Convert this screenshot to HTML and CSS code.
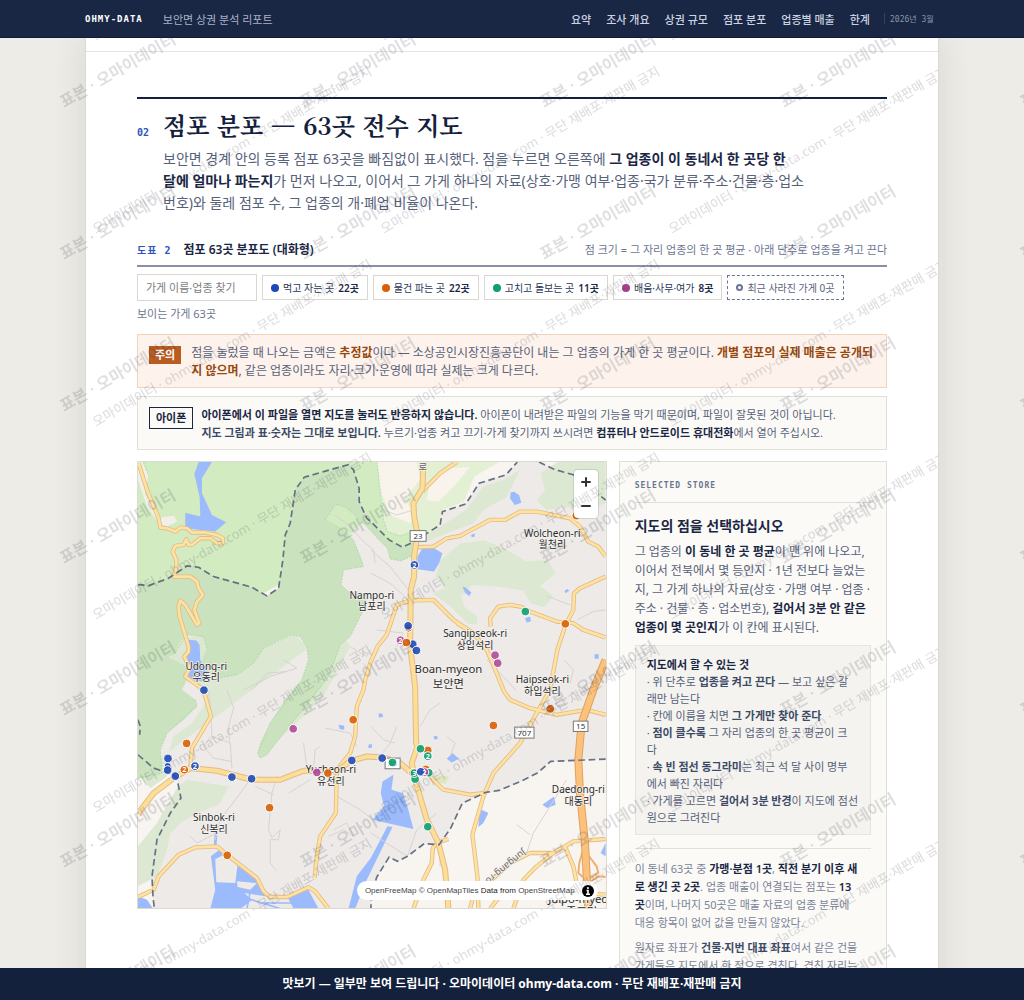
FILE: index.html
```html
<!DOCTYPE html>
<html lang="ko">
<head>
    <meta charset="UTF-8">
    <meta name="viewport" content="width=device-width, initial-scale=1.0">
    <title>보안면 상권 분석 리포트 - OHMY-DATA</title>
    <link rel="stylesheet" href="styles.css">
</head>
<body>
    <header class="topbar">
        <div class="topbar-inner">
            <span class="brand">OHMY-DATA</span>
            <span class="report-name">보안면 상권 분석 리포트</span>
            <nav>
                <a href="#summary">요약</a>
                <a href="#overview">조사 개요</a>
                <a href="#scale">상권 규모</a>
                <a href="#stores">점포 분포</a>
                <a href="#sales">업종별 매출</a>
                <a href="#limits">한계</a>
            </nav>
            <span class="issue">2026년 3월</span>
        </div>
    </header>

    <div class="stage">
        <main class="page">
            <div class="prev-end"></div>
            <section id="stores">
                <div class="section-head">
                    <span class="num">02</span>
                    <div>
                        <h2>점포 분포 — 63곳 전수 지도</h2>
                        <p class="lead">보안면 경계 안의 등록 점포 63곳을 빠짐없이 표시했다. 점을 누르면 오른쪽에 <b>그 업종이 이 동네서 한 곳당 한<br>달에 얼마나 파는지</b>가 먼저 나오고, 이어서 그 가게 하나의 자료(상호·가맹 여부·업종·국가 분류·주소·건물·층·업소번호)와 둘레 점포 수, 그 업종의 개·폐업 비율이 나온다.</p>
                    </div>
                </div>

                <div class="figure-head">
                    <span class="fig-no">도표 2</span>
                    <h3>점포 63곳 분포도 (대화형)</h3>
                    <span class="fig-note">점 크기 = 그 자리 업종의 한 곳 평균 · 아래 단추로 업종을 켜고 끈다</span>
                </div>

                <div class="filters">
                    <input type="text" placeholder="가게 이름·업종 찾기" aria-label="가게 이름·업종 찾기">
                    <button type="button"><i class="dot blue"></i>먹고 자는 곳 <b>22곳</b></button>
                    <button type="button"><i class="dot orange"></i>물건 파는 곳 <b>22곳</b></button>
                    <button type="button"><i class="dot green"></i>고치고 돌보는 곳 <b>11곳</b></button>
                    <button type="button"><i class="dot purple"></i>배움·사무·여가 <b>8곳</b></button>
                    <button type="button" class="closed"><i class="dot ring"></i>최근 사라진 가게 0곳</button>
                </div>
                <p class="visible-count">보이는 가게 63곳</p>

                <div class="notice warn">
                    <span class="tag">주의</span>
                    <p>점을 눌렀을 때 나오는 금액은 <b>추정값</b>이다 — 소상공인시장진흥공단이 내는 그 업종의 가게 한 곳 평균이다. <b>개별 점포의 실제 매출은 공개되지 않으며</b>, 같은 업종이라도 자리·크기·운영에 따라 실제는 크게 다르다.</p>
                </div>
                <div class="notice phone">
                    <span class="tag">아이폰</span>
                    <p><b>아이폰에서 이 파일을 열면 지도를 눌러도 반응하지 않습니다.</b> 아이폰이 내려받은 파일의 기능을 막기 때문이며, 파일이 잘못된 것이 아닙니다.<br><b class="soft">지도 그림과 표·숫자는 그대로 보입니다.</b> 누르기·업종 켜고 끄기·가게 찾기까지 쓰시려면 <b>컴퓨터나 안드로이드 휴대전화</b>에서 열어 주십시오.</p>
                </div>

                <div class="map-row">
                    <div class="map">
                        <svg class="map-canvas" viewBox="3 6 1404 1341" preserveAspectRatio="xMidYMin slice" role="img" aria-label="보안면 점포 분포 지도">
                            <rect x="0" y="0" width="1410" height="1350" fill="#f8f4f0"/>
                            <!-- 보안면 -->
                            <path fill="#edeae8" d="M3 374L35 377 95 355 150 318 185 322 230 350 345 382 390 408 425 385 438 300 445 225 460 190 475 90 502 52 560 35 635 14 650 30 667 85 667 125 690 175 707 190 757 240 797 262 832 245 910 195 917 155 987 132 1027 70 1107 45 1142 6H1207L1252 28 1312 45 1342 70 1407 120V898L1242 905 1202 940 1152 965 1087 992 1047 998 977 1030 942 1105 907 1155 862 1152 812 1190 782 1205 757 1192 720 1252 705 1300 702 1347H52L48 1310 45 1250 60 1140 100 1060 132 1015 120 957 110 945 50 925 3 885Z"/>
                            <!-- 숲 -->
                            <g fill="#dce8d1">
                                <path d="M722 6H1087L1012 50 982 125 917 150 905 200 850 240 790 235 735 215Z" fill="#e3f0d3"/>
                                <path d="M912 200L987 150 1040 80 1100 60 1150 30 1110 110 1040 150 1010 190 930 220 870 245 830 250Z"/>
                                <path d="M1212 40L1262 6H1407V130L1342 152 1290 140 1230 150 1200 120 1225 90Z"/>
                                <path d="M897 350L912 300 972 250 1042 242 1102 265 1170 305 1232 300 1257 340 1210 378 1250 410 1222 442 1182 430 1160 392 1082 380 1002 375 992 402 972 402 982 440 1022 470 1020 495 992 490 942 440 887 400 925 385Z"/>
                                <path d="M150 960L275 980 245 1035 180 1060 130 1090 100 1120 90 1170 60 1250 3 1280V1160L60 1090 120 985Z"/>
                                <path d="M3 945L40 985 90 950 95 880 110 830 165 790 205 730 185 690 150 650 100 600 120 540 205 525 240 560 215 600 260 640 340 600 390 560 470 525 515 560 520 640 540 700 420 780 345 950 370 895 560 710 640 560 600 500 Z"/>
                                <path d="M892 945L937 950 927 972 890 965Z" fill="#dde7c0"/>
                            </g>
                            <path fill="#d3ebc1" d="M3 6H722L727 75 735 130 740 180 752 215 790 228 830 215 837 245 800 262 757 240 690 175 560 300 200 500 3 374Z"/>
                            <path fill="#cae2bd" d="M3 374L35 377 95 355 150 318 185 322 230 350 345 382 390 408 425 385 438 300 445 225 460 190 475 90 502 52 560 35 635 14 650 30 667 85 667 125 690 175 707 190 757 240 797 262 837 245 832 285 792 303 760 297 752 265 722 235 690 200 660 170 625 140 595 133 565 180 575 190 610 205 650 240 670 290 680 320 620 330 612 375 640 400 690 405 685 440 660 490 640 530 610 555 595 600 575 650 540 700 500 750 440 820 390 885 370 895 362 880 370 850 400 790 445 720 495 660 515 600 510 560 490 530 465 525 430 540 380 565 350 610 300 645 240 655 205 635 195 600 210 565 200 530 150 525 130 545 110 585 95 592 120 605 150 620 150 660 135 690 175 720 180 740 140 780 90 820 70 870 75 940 40 955 3 955Z"/>
                            <path class="forest-edge" d="M722 6L727 75 735 130 740 180 752 215 790 228 830 215M832 285L792 303 760 297 752 265 722 235 690 200 660 170 625 140 595 133 565 180 610 205 650 240 670 290 680 320 620 330 612 375 640 400 690 405 685 440 640 530 610 555 575 650 440 820 390 885 370 895 362 880 400 790 495 660 515 600 510 560 490 530 465 525 380 565 350 610 300 645 240 655M210 565L200 530 150 525 110 585M175 720L180 740 90 820 70 870 75 940 3 955M20 6L35 50 25 100 50 150"/>
                            <path fill="#f2efe8" d="M3 6H16L35 50 24 100 50 150 70 172 112 168 120 185 90 200 65 190 30 140 3 60Z"/>
                            <path fill="#f8f4ec" d="M722 6H840L850 60 800 120 840 160 820 190 760 165 735 100ZM880 60L940 25 1000 20 960 70 905 125 870 120Z"/>

                            <!-- 물 -->
                            <g fill="#9bbbfc">
                                <path d="M185 6H225L195 55V100L225 165 268 187 235 215 145 205V158L190 170 188 110 172 42Z"/>
                                <path d="M155 540L178 542 188 555 190 600 215 640 195 665 155 655 150 600Z"/>
                                <path d="M857 265L887 262 917 280 907 310 892 335 842 328V290Z"/>
                                <path d="M1122 97L1132 95 1147 105 1154 128 1134 135 1120 115ZM1003 225L1014 220V230L1005 232ZM977 380L985 382 1004 398 997 408 985 398ZM1283 393L1292 387 1298 392 1288 400ZM1165 475L1180 470 1183 484 1170 488ZM1374 583H1386V597H1374Z"/>
                                <path d="M770 945L764 990 797 1000 812 1040 830 1108 707 1080 742 1040 732 1000 737 965Z"/>
                                <path d="M752 1100L767 1102 690 1260 655 1347H635L660 1250 702 1195Z"/>
                                <path d="M930 897L947 880 967 897 945 908ZM1027 1070L1035 1050 1055 1060 1040 1090 1025 1102ZM1217 1035L1252 1010 1257 1035 1232 1045ZM1407 1150L1392 1180 1407 1190ZM725 762L735 760 740 770 727 774ZM890 830L900 828 904 836 894 840ZM606 795L622 798V810L608 808ZM695 855L705 853V865H695Z"/>
                                <path d="M234 1110H243L238 1165H230ZM3 1310L30 1320 48 1347H3Z"/>
                                <path d="M222 1190L250 1168 262 1185 235 1198 238 1268 295 1270 302 1215 360 1250 385 1310 440 1315 510 1282 545 1347H220L235 1290Z"/>
                            </g>
                            <path fill="#edeae8" d="M322 1300L400 1312 455 1318 470 1347H312L345 1320ZM300 1265L360 1270 340 1290 302 1282Z"/>
                            <path fill="none" stroke="#9bbbfc" stroke-width="5" d="M310 1310L430 1347M340 1295L330 1347M380 1330H470"/>

                            <!-- 길 -->
                            <path class="lane" d="M595 165L640 200 675 240 710 270 715 310M215 690L222 760 225 830 280 850 285 925M270 690L290 745 275 800 278 850M222 830L200 860 230 895 285 905M340 960L250 1080 235 1140M420 950L405 1000 395 1110 405 1135 430 1110 425 1140 400 1140V1210L418 1232M355 980L410 1005M500 850L510 925M530 930L535 870 550 860M320 690L400 650 480 625 440 600M345 690L390 640 450 635M600 1010L670 1050 720 1090M575 1130L620 1110 650 1130 630 1090 590 1110M565 805L640 820 660 860M720 510L800 520 780 560M702 340L760 370 810 415M702 270L760 320 815 390M740 150L780 165 830 150M1050 600L1090 640 1137 690M1230 408L1260 420 1300 435M1322 480L1370 455 1407 450M1282 600L1310 630 1300 670M780 800L760 850 730 890M702 800L740 840 775 850M850 800L880 750 910 730M930 830L955 850 940 890M812 1190L840 1110 900 1060M910 1155V1220M1170 1180L1190 1120 1240 1040 1290 960M1140 1095L1180 1125M702 1120L812 1190M455 1000L520 960M160 1130L180 1150 230 1125M640 560L690 590 702 570M700 640L680 610"/>
                            <g class="road case">
                                <path id="r1" d="M5 10L30 90 65 175 70 203 90 205 115 215 130 203 150 205 165 218 200 217 240 225 258 235 258 250 240 250 220 235 190 235 165 255 155 255 148 238 140 255 115 258 107 275 118 300V325L110 350H160L180 365 185 385 198 405 180 425 172 450 187 490 180 495 145 435 130 422 125 440 128 470 155 560V575L142 590 158 625 145 650 200 690 222 770 165 865 160 925"/>
                                <path id="r2" d="M680 690L660 740 655 830 640 880 600 930 597 1060 550 1130 540 1190 533 1255M680 690L685 660 702 605 722 560 750 525 780 435 820 422 890 420 910 440 950 480 1010 520 1050 570 1080 640 1102 695 1120 720 1180 745 1260 765 1350 750 1407 765M960 6L910 40 870 80 857 95"/>
                                <path id="r3" d="M840 262L890 260 930 235 970 228 1060 180H1105L1150 155H1200L1300 175 1330 200 1355 245 1385 260 1407 290M1062 500L1060 475 1085 440 1120 435 1150 440 1180 455 1260 485 1310 490 1340 510 1407 533M1407 350L1330 385 1312 400 1310 450 1285 500 1262 570 1240 690 1200 760 1150 850 1070 940 1040 1010 1007 1125 1022 1250 1025 1347M880 950L920 990 1000 1005 1040 1000M960 490L1010 520"/>
                                <path id="r4" d="M1407 1138L1310 1145 1250 1180H1180L1120 1210 1060 1265 1010 1310 1000 1347M1250 1180L1200 1220 1160 1260 1130 1347M1285 1160L1310 1220 1320 1270M935 1138L900 1150 888 1165 885 1210 860 1260 830 1347M3 1312L50 1290 65 1250 125 1185 175 1163 240 1160 270 1185 360 1255 380 1295 400 1312H450L515 1283 535 1295 575 1347M1060 1347L1090 1310 1160 1310M1320 1300L1407 1305"/>
                            </g>
                            <g class="road fill">
                                <use href="#r1"/><use href="#r2"/><use href="#r3"/><use href="#r4"/>
                            </g>
                            <g class="trunk case">
                                <path id="t1" d="M3 1062L50 1000 110 955 160 925 240 933 345 960H430L500 933 600 935 640 905 690 890 740 893 790 910 822 938M860 6L857 85 830 130 832 170 842 220 832 290V350L822 390 820 560 835 680 838 850 842 860 825 910 835 960 870 1080 905 1150 925 1230 935 1347"/>
                            </g>
                            <g class="trunk fill"><use href="#t1"/></g>
                            <path class="ramp" d="M1345 1150L1328 1210 1325 1240 1350 1262 1385 1240 1380 1220 1350 1180M1355 1270L1385 1250 1407 1252"/>
                            <path class="highway case" d="M1407 600L1370 690 1335 790 1325 900 1330 1000 1345 1150 1355 1347"/>
                            <path class="highway" d="M1407 600L1370 690 1335 790 1325 900 1330 1000 1345 1150 1355 1347"/>

                            <!-- 면 경계 -->
                            <path class="boundary" d="M3 374L35 377 95 355 150 318 185 322 230 350 345 382 390 408 425 385 438 300 445 225 460 190 475 90 502 52 560 35 635 14 650 30 667 85 667 125 690 175 707 190 757 240 797 262 832 245 910 195 917 155 987 132 1027 70 1107 45 1142 6M1207 6L1252 28 1312 45 1342 70 1407 120M1407 898L1242 905 1202 940 1152 965 1087 992 1047 998 977 1030 942 1105 907 1155 862 1152 812 1190 782 1205 757 1192 720 1252 705 1300 702 1347M3 885L50 925 110 945 120 957 132 1015 100 1060 60 1140 45 1250 48 1310 52 1347M3 780L10 800 8 825"/>

                            <g class="shield">
                                <rect x="820" y="212" width="48" height="32"/><text x="844" y="238">23</text>
                                <rect x="1134" y="802" width="58" height="33"/><text x="1163" y="828">707</text>
                                <rect x="1310" y="784" width="44" height="31"/><text x="1332" y="809">15</text>
                                <rect x="745" y="895" width="45" height="32"/><text x="767" y="920">30</text>
                            </g>
                            <g class="place">
                                <text class="street" x="858" y="29">로</text>
                                <text x="1247" y="230">Wolcheon-ri</text><text x="1247" y="265">월천리</text>
                                <text x="705" y="416">Nampo-ri</text><text x="705" y="451">남포리</text>
                                <text x="1015" y="531">Sangipseok-ri</text><text x="1015" y="566">상입석리</text>
                                <text x="208" y="630">Udong-ri</text><text x="208" y="665">우동리</text>
                                <text x="1217" y="671">Haipseok-ri</text><text x="1217" y="706">하입석리</text>
                                <text x="582" y="941">Yucheon-ri</text><text x="582" y="976">유천리</text>
                                <text x="1325" y="1000">Daedong-ri</text><text x="1325" y="1035">대동리</text>
                                <text x="231" y="1084">Sinbok-ri</text><text x="231" y="1119">신복리</text>
                                <text class="street start" transform="translate(1158 1168) rotate(141)">Jungang-ro</text>
                                <g class="big">
                                    <text x="935" y="641">Boan-myeon</text><text x="935" y="684">보안면</text>
                                    <text x="1335" y="1330">Julpo-myeon</text><text x="1335" y="1370">줄포면</text>
                                </g>
                            </g>

                            <!-- 점포 -->
                            <g class="stores">
                                <g fill="#d95f02">
                                    <circle cx="1319" cy="167" r="13"/><circle cx="1286" cy="492" r="13"/><circle cx="815" cy="505" r="12"/>
                                    <circle cx="649" cy="780" r="13"/><circle cx="1070" cy="797" r="13"/><circle cx="1241" cy="747" r="13"/>
                                    <circle cx="149" cy="851" r="13"/><circle cx="142" cy="930" r="13"/><circle cx="573" cy="940" r="13"/>
                                    <circle cx="398" cy="1044" r="13"/><circle cx="271" cy="1187" r="13"/><circle cx="873" cy="872" r="13"/>
                                    <circle cx="867" cy="929" r="13"/><circle cx="829" cy="940" r="13"/>
                                </g>
                                <g fill="#1f4bb8">
                                    <circle cx="833" cy="315" r="13"/><circle cx="828" cy="553" r="13"/><circle cx="839" cy="572" r="13"/>
                                    <circle cx="814" cy="498" r="13"/><circle cx="201" cy="691" r="13"/><circle cx="92" cy="918" r="10"/><circle cx="93" cy="896" r="13"/>
                                    <circle cx="92" cy="931" r="13"/><circle cx="115" cy="949" r="13"/><circle cx="174" cy="919" r="13"/>
                                    <circle cx="285" cy="952" r="13"/><circle cx="344" cy="957" r="13"/><circle cx="645" cy="902" r="13"/>
                                    <circle cx="736" cy="895" r="13"/>
                                </g>
                                <g fill="#b04a98">
                                    <circle cx="791" cy="541" r="13"/><circle cx="1075" cy="586" r="13"/><circle cx="1083" cy="610" r="13"/>
                                    <circle cx="469" cy="807" r="13"/><circle cx="540" cy="938" r="13"/>
                                </g>
                                <circle cx="809" cy="548" r="13" fill="#d95f02"/>
                                <g fill="#109e73">
                                    <circle cx="1166" cy="455" r="13"/><circle cx="851" cy="867" r="13"/><circle cx="873" cy="889" r="13"/>
                                    <circle cx="767" cy="908" r="13"/><circle cx="876" cy="939" r="13"/><circle cx="835" cy="958" r="13"/>
                                    <circle cx="873" cy="1101" r="13"/><circle cx="833" cy="940" r="13"/>
                                </g>
                                <circle cx="863" cy="937" r="13" fill="#b04a98"/>
                                <circle cx="852" cy="936" r="13" fill="#1f4bb8"/>
                                <g class="count">
                                    <text x="833" y="323">2</text><text x="791" y="549">2</text><text x="142" y="938">2</text>
                                    <text x="174" y="927">2</text><text x="873" y="897">2</text><text x="863" y="945">2</text><text x="833" y="948">3</text>
                                </g>
                            </g>
                        </svg>
                        <div class="map-zoom">
                            <button type="button" aria-label="확대"><svg viewBox="0 0 24 24"><path d="M12 8v8M8 12h8"/></svg></button>
                            <button type="button" aria-label="축소"><svg viewBox="0 0 24 24"><path d="M8 12h8"/></svg></button>
                        </div>
                        <div class="map-credit">
                            <span><a href="#openfreemap">OpenFreeMap</a> <a href="#openmaptiles">© OpenMapTiles</a> Data from <a href="#osm">OpenStreetMap</a></span>
                            <svg viewBox="0 0 12 12"><circle cx="6" cy="6" r="6"/><path d="M6 2v2M4.500 5.500H6V9M4 9.200h4" fill="none" stroke="#fff" stroke-width="1.600"/></svg>
                        </div>
                    </div>

                    <aside class="panel">
                        <div class="panel-label">SELECTED STORE</div>
                        <h4>지도의 점을 선택하십시오</h4>
                        <p class="panel-intro">그 업종의 <b>이 동네 한 곳 평균</b>이 맨 위에 나오고, 이어서 전북에서 몇 등인지 · 1년 전보다 늘었는지, 그 가게 하나의 자료(상호 · 가맹 여부 · 업종 · 주소 · 건물 · 층 · 업소번호), <b>걸어서 3분 안 같은 업종이 몇 곳인지</b>가 이 칸에 표시된다.</p>
                        <div class="howto">
                            <b class="howto-title">지도에서 할 수 있는 것</b>
                            <p>· 위 단추로 <b>업종을 켜고 끈다</b> — 보고 싶은 갈<br>래만 남는다</p>
                            <p>· 칸에 이름을 치면 <b>그 가게만 찾아 준다</b></p>
                            <p>· <b>점이 클수록</b> 그 자리 업종의 한 곳 평균이 크<br>다</p>
                            <p>· <b>속 빈 점선 동그라미</b>는 최근 석 달 사이 명부<br>에서 빠진 자리다</p>
                            <p>· 가게를 고르면 <b>걸어서 3분 반경</b>이 지도에 점선 원으로 그려진다</p>
                        </div>
                        <div class="panel-foot">
                            <p>이 동네 63곳 중 <b>가맹·분점 1곳</b>, <b>직전 분기 이후 새로 생긴 곳 2곳</b>. 업종 매출이 연결되는 점포는 <b>13곳</b>이며, 나머지 50곳은 매출 자료의 업종 분류에 대응 항목이 없어 값을 만들지 않았다.</p>
                            <p>원자료 좌표가 <b class="soft">건물·지번 대표 좌표</b>여서 같은 건물 가게들은 지도에서 한 점으로 겹친다. 겹친 자리는</p>
                        </div>
                    </aside>
                </div>
            </section>
            <svg class="mark" aria-hidden="true">
                <defs>
                    <pattern id="mark-page" patternUnits="userSpaceOnUse" x="0" y="18" width="288" height="193">
                        <text class="mark-text" transform="translate(10 178) rotate(-30)">오마이데이터 · ohmy-data.com · 무단 재배포·재판매 금지</text>
                    </pattern>
                </defs>
                <rect width="100%" height="100%" fill="url(#mark-page)"/>
            </svg>
        </main>
        <svg class="mark" aria-hidden="true">
            <defs>
                <pattern id="mark-sample" patternUnits="userSpaceOnUse" x="50" y="-18" width="240" height="152">
                    <text class="mark-text sample" transform="translate(14 88) rotate(-30)">표본 · 오마이데이터</text>
                </pattern>
            </defs>
            <rect width="100%" height="100%" fill="url(#mark-sample)"/>
        </svg>
    </div>

    <footer class="sample-bar">맛보기 — 일부만 보여 드립니다 · 오마이데이터 ohmy-data.com · 무단 재배포·재판매 금지</footer>
</body>
</html>
```
FILE: styles.css
```css
* {
    box-sizing: border-box;
}
body {
    display: flex;
    flex-direction: column;
    height: 100vh;
    margin: 0;
    background: #eeece7;
    color: #1a2744;
    font-family: "Noto Sans", "Noto Sans CJK KR", sans-serif;
    font-size: 12px;
}
h2, h3, h4, p {
    margin: 0;
}
b {
    color: #1a2744;
    font-weight: 600;
}
b.soft {
    color: #3d4a66;
}

/* top bar */
.topbar {
    flex: none;
    height: 38px;
    background: #1a2744;
    border-bottom: 1px solid #0f1b38;
}
.topbar-inner {
    display: flex;
    align-items: center;
    max-width: 854px;
    height: 100%;
    margin: 0 auto;
    font-size: 11px;
}
.brand {
    color: #fff;
    font-family: "DejaVu Sans Mono", monospace;
    font-size: 9px;
    font-weight: 700;
    letter-spacing: 1px;
}
.report-name {
    margin-left: 20px;
    color: #a9b3c8;
}
.topbar nav {
    display: flex;
    gap: 15px;
    margin-left: auto;
}
.topbar nav a {
    color: #cbd3e2;
    text-decoration: none;
    font-weight: 500;
}
.issue {
    width: 55px;
    margin-left: 14px;
    padding-left: 5px;
    border-left: 1px solid #33415f;
    color: #8793ad;
    font-family: "DejaVu Sans Mono", "Noto Sans CJK KR", monospace;
    font-size: 8px;
    white-space: nowrap;
}

/* page */
.stage {
    position: relative;
    flex: 1;
    min-height: 0;
    overflow: hidden;
}
.page {
    position: relative;
    max-width: 854px;
    min-height: 100%;
    margin: 0 auto;
    background: #fff;
    border: 1px solid #dcdad3;
    border-width: 0 1px;
    box-shadow: 0 0 32px rgba(60, 55, 40, 0.12);
}
.prev-end {
    height: 14px;
    border-bottom: 1px solid #e5e5df;
}
section {
    padding: 45px 51px 40px;
}
.section-head {
    display: flex;
    gap: 12px;
    padding-top: 8px;
    border-top: 2px solid #14213d;
}
.num {
    width: 14px;
    padding-top: 20px;
    color: #2f56c0;
    font-family: "DejaVu Sans Mono", monospace;
    font-size: 10px;
    font-weight: 700;
}
h2 {
    color: #14213d;
    font-family: "Noto Serif CJK KR", "Noto Serif KR", serif;
    font-size: 24px;
    font-weight: 700;
    line-height: 36px;
}
.lead {
    max-width: 644px;
    margin-top: 5px;
    color: #56617a;
    font-size: 14px;
    line-height: 22px;
}
.figure-head {
    display: flex;
    align-items: baseline;
    margin-top: 27px;
    padding-bottom: 5px;
    border-bottom: 2px solid #8791a3;
    line-height: 18px;
}
.fig-no {
    color: #2f56c0;
    font-family: "DejaVu Sans Mono", "Noto Sans CJK KR", monospace;
    font-size: 10px;
    font-weight: 600;
    letter-spacing: 1px;
}
h3 {
    margin-left: 12px;
    font-size: 12px;
    font-weight: 600;
}
.fig-note {
    margin-left: auto;
    color: #6b7690;
    font-size: 11px;
}
.filters {
    display: flex;
    gap: 5px;
    margin-top: 7px;
}
.filters input {
    width: 120px;
    height: 27px;
    padding: 0 8px;
    border: 1px solid #d9d7cf;
    background: #fff;
    font: 11px "Noto Sans", "Noto Sans CJK KR", sans-serif;
}
.filters input::placeholder {
    color: #7d7d80;
}
.filters button {
    display: flex;
    align-items: center;
    gap: 4px;
    height: 25px;
    margin-top: 1px;
    padding: 0 8px;
    border: 1px solid #d9d7cf;
    background: #fff;
    color: #2a3654;
    font: 10px "Noto Sans", "Noto Sans CJK KR", sans-serif;
    white-space: nowrap;
}
.filters .closed {
    border: 1px dashed #6b7690;
    color: #56617a;
}
.dot {
    width: 8px;
    height: 8px;
    border-radius: 50%;
}
.blue { background: #1d48b8; }
.orange { background: #d95f02; }
.green { background: #0f9e72; }
.purple { background: #a53f8c; }
.ring {
    width: 7px;
    height: 7px;
    border: 2px solid #6b7690;
}
.visible-count {
    margin-top: 4px;
    color: #6b7690;
    font-size: 11px;
    line-height: 18px;
}
.notice {
    display: flex;
    align-items: flex-start;
    padding: 9px 11px 7px;
    border: 1px solid #e1dfd6;
    background: #fbfaf7;
    color: #56617a;
    font-size: 11px;
    line-height: 18px;
}
.notice .tag {
    flex: none;
    padding: 0 6px;
    font-weight: 600;
    font-size: 11px;
}
.warn {
    margin-top: 11px;
    border-color: #efd5bd;
    background: #fdf3ec;
    font-size: 12px;
}
.warn .tag {
    margin: 2px 10px 0 0;
    background: #b85c22;
    color: #fff;
}
.warn b {
    color: #97480f;
}
.phone {
    margin-top: 8px;
}
.phone .tag {
    margin: 1px 8px 0 0;
    border: 1px solid #1a2744;
    color: #1a2744;
    line-height: 20px;
}

/* map */
.map-row {
    display: grid;
    grid-template-columns: 7fr 4fr;
    align-items: start;
    gap: 12px;
    margin-top: 11px;
}
.map {
    position: relative;
    height: 448px;
    border: 1px solid #dcdad3;
    overflow: hidden;
}
.map-canvas {
    display: block;
    width: 100%;
    height: 100%;
}
.forest-edge {
    fill: none;
    stroke: #9ad59a;
    stroke-width: 2;
    stroke-dasharray: 6 4;
}
.road, .trunk, .highway, .lane, .ramp {
    fill: none;
    stroke-linejoin: round;
}
.lane { stroke: #d6d3d2; stroke-width: 3; }
.road.case { stroke: #e6b988; stroke-width: 13; }
.road.fill { stroke: #fce3a0; stroke-width: 8; }
.trunk.case { stroke: #e6b988; stroke-width: 18; }
.trunk.fill { stroke: #fbdf96; stroke-width: 12; }
.ramp { stroke: #efb074; stroke-width: 6; }
.highway { stroke: #fcc27c; stroke-width: 18; }
.highway.case { stroke: #e0a060; stroke-width: 24; }
.boundary {
    fill: none;
    stroke: #667083;
    stroke-width: 5;
    stroke-dasharray: 20 11;
}
.shield rect {
    fill: #fff;
    stroke: #777;
    stroke-width: 3;
}
.shield text {
    font: 24px "Noto Sans", sans-serif;
    fill: #333;
    text-anchor: middle;
}
.place text {
    font: 30px "Noto Sans", "Noto Sans CJK KR", sans-serif;
    fill: #2b2b2b;
    stroke: #f6f4f2;
    stroke-width: 4;
    paint-order: stroke;
    text-anchor: middle;
}
.place .big text {
    font-size: 34px;
}
.place .street {
    font-size: 28px;
    fill: #666;
}
.place .start {
    text-anchor: start;
}
.stores circle {
    stroke: #fff;
    stroke-width: 3;
    fill-opacity: 0.9;
}
.count text {
    fill: #fff;
    font: 700 22px "Noto Sans", sans-serif;
    text-anchor: middle;
}
.map-zoom {
    position: absolute;
    top: 8px;
    right: 8px;
    width: 24px;
    border-radius: 4px;
    background: #fff;
    box-shadow: 0 0 0 1px rgba(0, 0, 0, 0.1);
}
.map-zoom button {
    display: block;
    width: 24px;
    height: 24px;
    padding: 0;
    border: 0;
    background: none;
}
.map-zoom svg {
    display: block;
    stroke: #333;
    stroke-width: 2;
    stroke-linecap: round;
}
.map-credit {
    position: absolute;
    right: 8px;
    bottom: 8px;
    display: flex;
    align-items: center;
    gap: 7px;
    height: 19px;
    padding: 0 4px 0 8px;
    border-radius: 10px;
    background: #fff;
    color: #222;
    font: 8px "Liberation Sans", Arial, sans-serif;
}
.map-credit a {
    color: #444;
    text-decoration: none;
}
.map-credit svg {
    width: 12px;
    height: 12px;
}

/* side panel */
.panel {
    padding: 16px 15px 20px;
    border: 1px solid #e1dfd6;
    background: #fbfaf7;
}
.panel-label {
    padding-bottom: 8px;
    border-bottom: 1px solid #e1dfd6;
    color: #6b7690;
    font-family: "DejaVu Sans Mono", monospace;
    font-size: 8px;
    font-weight: 600;
    letter-spacing: 1px;
    line-height: 16px;
}
h4 {
    margin-top: 13px;
    font-size: 14px;
    font-weight: 600;
    line-height: 20px;
}
.panel-intro {
    margin-top: 6px;
    color: #56617a;
    line-height: 19px;
}
.howto {
    margin-top: 8px;
    padding: 10px 11px 8px;
    border: 1px solid #e6e4dd;
    background: #f4f3ef;
    color: #56617a;
    font-size: 11px;
    line-height: 17px;
}
.howto b {
    color: #3d4a66;
}
.howto .howto-title {
    color: #1a2744;
}
.panel-foot {
    margin-top: 13px;
    padding: 11px 12px 0 0;
    border-top: 1px solid #e1dfd6;
    color: #7a8398;
    font-size: 11px;
    line-height: 18px;
}
.panel-foot p + p {
    margin-top: 7px;
}

/* watermark */
.mark {
    position: absolute;
    top: 0;
    left: 0;
    width: 100%;
    height: 100%;
    pointer-events: none;
}
.mark-text {
    fill: rgba(26, 30, 50, 0.14);
    font: 500 13px "Noto Sans", "Noto Sans CJK KR", sans-serif;
}
.mark-text.sample {
    font-size: 16px;
    font-weight: 600;
}

.sample-bar {
    flex: none;
    height: 32px;
    background: #14213d;
    color: #fff;
    font-size: 12px;
    font-weight: 700;
    line-height: 32px;
    text-align: center;
}
```
